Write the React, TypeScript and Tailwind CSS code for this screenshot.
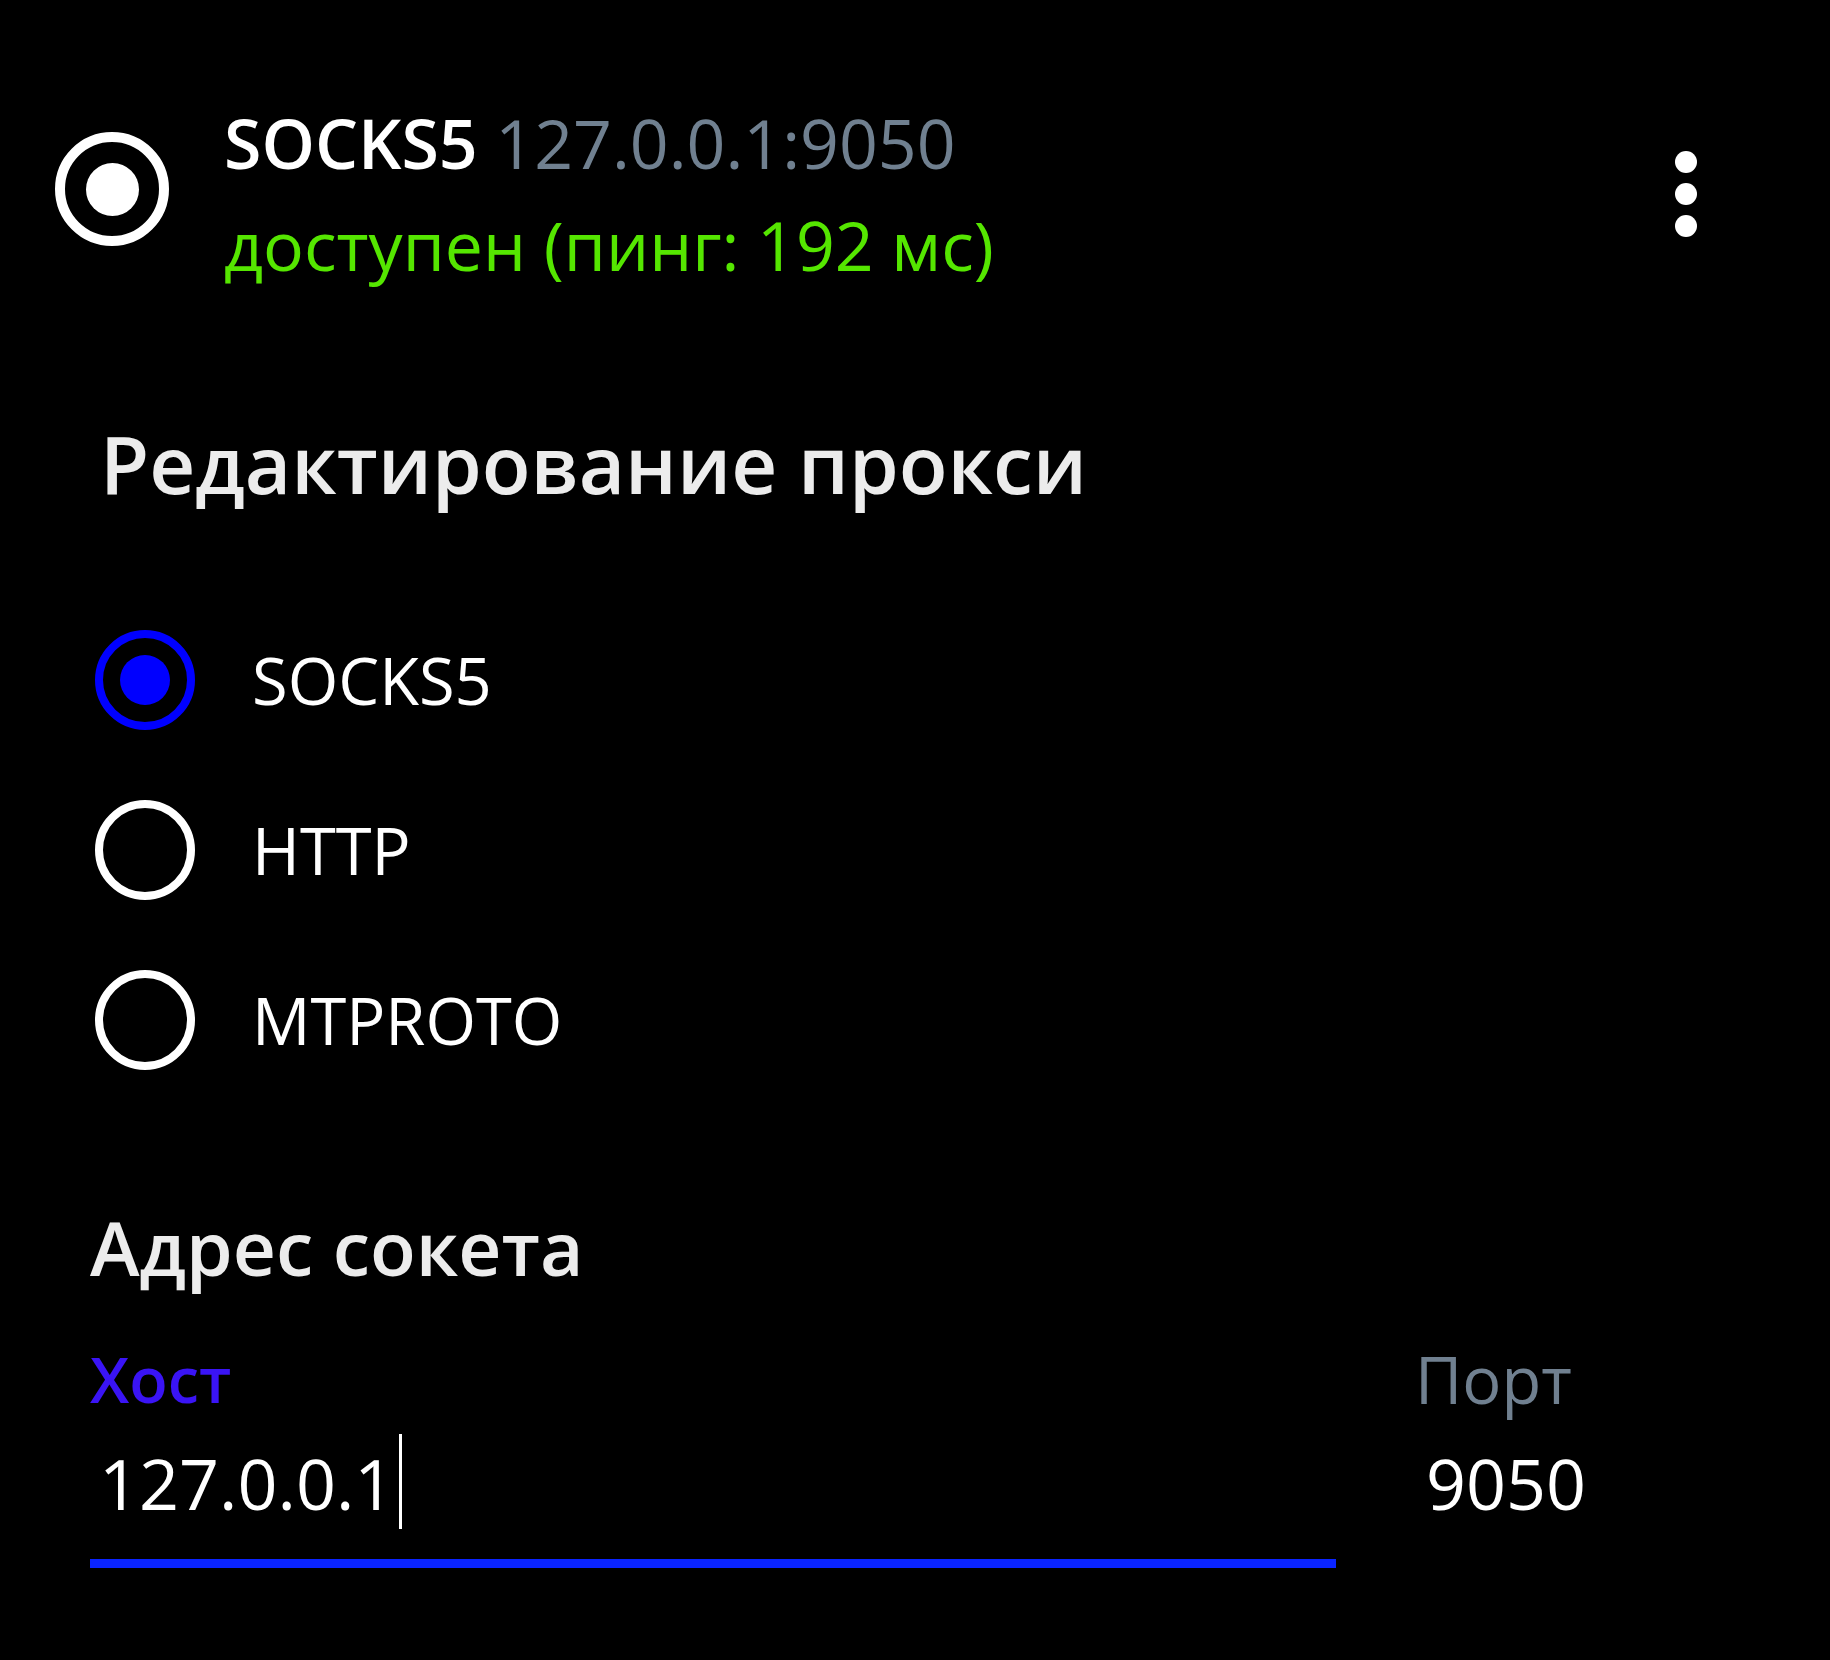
import type { ReactElement } from 'react';

const proxyTypes = ['SOCKS5', 'HTTP', 'MTPROTO'];

function Radio({ checked }: { checked: boolean }): ReactElement {
  return (
    <div
      className={`flex h-[100px] w-[100px] shrink-0 items-center justify-center rounded-full border-[8px] ${
        checked ? 'border-[#0000ff]' : 'border-white'
      }`}
    >
      {checked && <div className="h-[50px] w-[50px] rounded-full bg-[#0000ff]" />}
    </div>
  );
}

export default function App(): ReactElement {
  return (
    <div
      className="h-[1660px] w-[1830px] overflow-hidden bg-black text-white"
      style={{ fontFamily: '"Open Sans", "Noto Sans", sans-serif' }}
    >
      {/* current proxy row */}
      <div className="flex pl-[55px] pr-[133px] pt-[92px]">
        <div className="mt-[40px] flex h-[114px] w-[114px] shrink-0 items-center justify-center rounded-full border-[10px] border-white">
          <div className="h-[53px] w-[53px] rounded-full bg-white" />
        </div>
        <div className="ml-[55px] text-[68px] leading-[102px]">
          <div className="whitespace-nowrap">
            <span className="font-semibold text-white">SOCKS5</span>{' '}
            <span className="text-[#708090]">127.0.0.1:9050</span>
          </div>
          <div className="whitespace-nowrap text-[#55e600]">доступен (пинг: 192 мс)</div>
        </div>
        <div className="ml-auto mt-[59px] flex flex-col gap-[10px]">
          <div className="h-[22px] w-[22px] rounded-full bg-white" />
          <div className="h-[22px] w-[22px] rounded-full bg-white" />
          <div className="h-[22px] w-[22px] rounded-full bg-white" />
        </div>
      </div>

      {/* edit form */}
      <div className="mt-[112px] pl-[100px] text-[80px] font-semibold leading-[110px] text-[#ececec]">
        Редактирование прокси
      </div>

      <div className="mt-[77px] pl-[95px]">
        {proxyTypes.map((t, i) => (
          <div key={t} className="flex h-[170px] items-center gap-[57px]">
            <Radio checked={i === 0} />
            <span className="text-[65px] leading-[88px] text-white">{t}</span>
          </div>
        ))}
      </div>

      <div className="mt-[92px] pl-[90px] text-[75px] font-semibold leading-[100px] text-[#ececec]">
        Адрес сокета
      </div>

      <div className="mt-[42px] flex pl-[90px]">
        <div className="w-[1246px]">
          <div className="text-[63px] font-semibold leading-[80px] text-[#3a14f5]">Хост</div>
          <div className="mt-[15px] flex h-[95px] items-end pl-[9px]">
            <span className="text-[70px] leading-[92px] text-white">127.0.0.1</span>
            <span className="ml-[5px] h-[95px] w-[3px] bg-white" />
          </div>
          <div className="mt-[30px] h-[9px] bg-[#0a24ff]" />
        </div>
        <div className="ml-[79px]">
          <div className="text-[65px] font-medium leading-[80px] text-[#708090]">Порт</div>
          <div className="mt-[15px] flex h-[95px] items-end pl-[11px]">
            <span className="text-[70px] leading-[92px] text-white">9050</span>
          </div>
        </div>
      </div>
    </div>
  );
}
